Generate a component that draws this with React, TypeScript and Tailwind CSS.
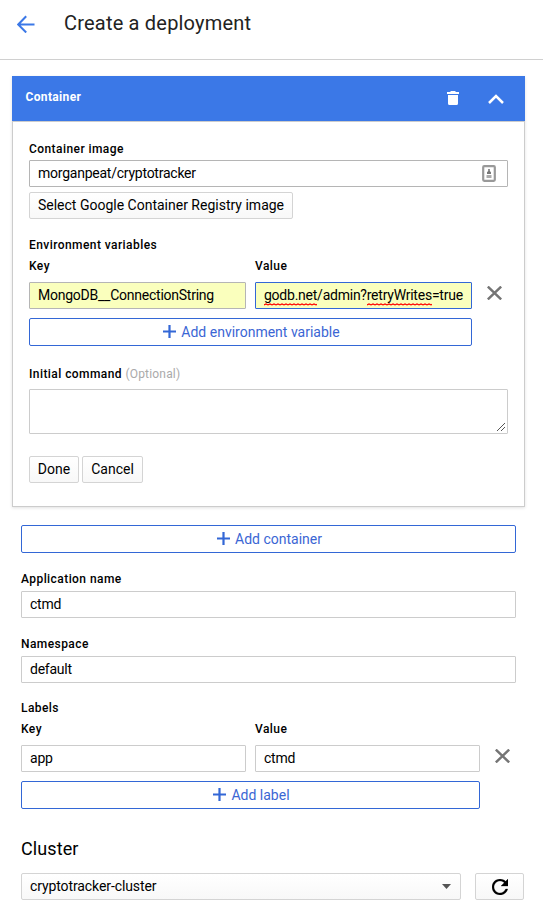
import type { ReactNode } from 'react';

const input =
  'flex h-[27px] items-center rounded-[1px] border px-2 text-[14px] tracking-[-0.24px] whitespace-nowrap';
const button =
  'flex h-[27px] items-center justify-center rounded-[2px] border border-[#d4d4d4] bg-linear-to-b from-white to-[#f8f8f8] text-[14px]';

function Label({ children, className = '' }: { children: ReactNode; className?: string }) {
  return (
    <div className={`h-4 text-[12px] leading-4 font-medium tracking-[0.43px] whitespace-nowrap ${className}`}>
      {children}
    </div>
  );
}

function AddButton({ children, className = '' }: { children: ReactNode; className?: string }) {
  return (
    <button
      className={`flex h-7 w-full items-center justify-center gap-[5px] rounded-[2px] border border-[#3367d6] pl-[2px] text-[14px] text-[#3b66d4] ${className}`}
    >
      <svg width="13" height="13" viewBox="0 0 13 13" className="mb-[2px]" fill="none" stroke="#3367d6" strokeWidth="2.2">
        <path d="M6.5 0v13M0 6.5h13" />
      </svg>
      {children}
    </button>
  );
}

function RemoveIcon() {
  return (
    <svg width="15" height="14" viewBox="0 0 15 14" fill="none" stroke="#757575" strokeWidth="2.5">
      <path d="M.8.6l13.4 12.8M14.2.6L.8 13.4" />
    </svg>
  );
}

function Misspelled({ children }: { children: ReactNode }) {
  return (
    <span className="relative">
      {children}
      <svg className="absolute bottom-0 left-0 h-[3px] w-full" aria-hidden="true">
        <defs>
          <pattern id="squiggle" width="4" height="3" patternUnits="userSpaceOnUse">
            <path d="M0 2L2 1L4 2" fill="none" stroke="#f00" strokeWidth="1.2" />
          </pattern>
        </defs>
        <rect width="100%" height="3" fill="url(#squiggle)" />
      </svg>
    </span>
  );
}

export default function App() {
  return (
    <div className="h-[912px] w-[543px] overflow-hidden bg-white font-['Roboto',sans-serif] text-black">
      <header className="flex h-[60px] items-start border-b border-[#d0d0d0]">
        <svg width="18" height="18" viewBox="0 0 18 18" className="mt-[15px] ml-[17px]" fill="none" stroke="#3b78e7" strokeWidth="2">
          <path d="M17.5 9.5H1.5M9.2 1.2L1.2 9.5l8 8" />
        </svg>
        <h1 className="mt-[11px] ml-[29px] text-[20px] leading-6 tracking-[0.2px] text-[#222]">Create a deployment</h1>
      </header>

      <section className="mt-4 ml-3 h-[431px] w-[513px] shadow-[0_1px_3px_rgba(0,0,0,0.12)]">
        <div className="flex h-[45px] items-center bg-[#3b78e7] text-white">
          <div className="mb-[3px] ml-[13.5px] flex-1 text-[12px] font-bold tracking-[0.35px]">Container</div>
          <svg width="12" height="14" viewBox="0 0 12 14" className="mb-[2px]" fill="#fff">
            <path d="M0 1h3l1-1h4l1 1h3v2H0zM1 4h10v8.5a1.5 1.5 0 0 1-1.5 1.5h-7A1.5 1.5 0 0 1 1 12.5z" />
          </svg>
          <svg width="16" height="10" viewBox="0 0 16 10" className="mr-[21px] ml-[29px]" fill="none" stroke="#fff" strokeWidth="2.5">
            <path d="M1 9l7-7 7 7" />
          </svg>
        </div>
        <div className="h-[386px] border border-[#ccc] px-4 pt-[19px]">
          <Label>Container image</Label>
          <div className={`${input} mt-[3px] w-[479px] justify-between border-[#b5b5b5] bg-white`}>
            <span>morganpeat/cryptotracker</span>
            <svg width="14" height="17" viewBox="0 0 14 17" className="mr-[3px]">
              <rect x="1.2" y="1.2" width="11.6" height="14.6" rx="1" fill="none" stroke="#999" strokeWidth="2.2" />
              <path d="M6.2 4h1.6v2L9 7.200V9H5V7.200L6.200 6z" fill="#777" />
              <path d="M4.500 10h5v3h-5z" fill="#aaa" />
            </svg>
          </div>
          <button className={`${button} mt-[5px] w-[264px]`}>Select Google Container Registry image</button>

          <Label className="mt-[18px]">Environment variables</Label>
          <div className="mt-[5px] flex">
            <Label className="w-[226px]">Key</Label>
            <Label>Value</Label>
          </div>
          <div className="mt-2 flex">
            <div className={`${input} w-[217px] border-[#b5b5b5] bg-[#faffbd]`}>MongoDB__ConnectionString</div>
            <div className={`${input} ml-[9px] w-[217px] border-[#3367d6] bg-[#faffbd]`}>
              <Misspelled>godb.net</Misspelled>/admin?<Misspelled>retryWrites</Misspelled>=true
            </div>
            <button className="mt-[4px] ml-[15px] h-[14px]">
              <RemoveIcon />
            </button>
          </div>
          <AddButton className="mt-[9px] max-w-[443px]">Add environment variable</AddButton>

          <Label className="mt-5">
            Initial command <span className="font-normal tracking-[0.18px] text-[#aaa]">(Optional)</span>
          </Label>
          <div className="mt-[7px] flex h-[45px] w-[479px] items-end justify-end rounded-[1px] border border-[#ccc] p-[2px]">
            <svg width="8" height="8" viewBox="0 0 8 8" stroke="#555" strokeWidth="1">
              <path d="M0 8L8 0M4 8L8 4" />
            </svg>
          </div>
          <div className="mt-[22px] flex gap-[3px]">
            <button className={`${button} w-[50px]`}>Done</button>
            <button className={`${button} w-[61px]`}>Cancel</button>
          </div>
        </div>
      </section>

      <div className="ml-[21px] w-[495px] pt-[18px]">
        <AddButton>Add container</AddButton>
        <Label className="mt-[18px]">Application name</Label>
        <div className={`${input} mt-1 border-[#ccc] bg-white`}>ctmd</div>
        <Label className="mt-[18px]">Namespace</Label>
        <div className={`${input} mt-1 border-[#ccc] bg-white`}>default</div>

        <Label className="mt-[17px]">Labels</Label>
        <div className="mt-[5px] flex">
          <Label className="w-[234px]">Key</Label>
          <Label>Value</Label>
        </div>
        <div className="mt-2 flex">
          <div className={`${input} w-[225px] border-[#ccc] bg-white`}>app</div>
          <div className={`${input} ml-[9px] w-[225px] border-[#ccc] bg-white`}>ctmd</div>
          <button className="mt-[4px] ml-[15px] h-[14px]">
            <RemoveIcon />
          </button>
        </div>
        <AddButton className="mt-[9px] max-w-[459px]">Add label</AddButton>

        <h2 className="mt-7 h-6 text-[18px] leading-6 tracking-[0.1px]">Cluster</h2>
      </div>
      <div className="mt-3 ml-[21px] flex">
        <button className={`${button} w-[440px] pr-[9px] pl-2`}>
          <span className="flex-1 text-left tracking-[-0.1px]">cryptotracker-cluster</span>
          <svg width="9" height="5" viewBox="0 0 9 5" fill="#555">
            <path d="M0 0h9L4.5 5z" />
          </svg>
        </button>
        <button className={`${button} ml-[14px] w-[49px]`}>
          <svg width="16" height="16" viewBox="4 4 16 16" fill="#000" stroke="#000" strokeWidth="0.3">
            <path d="M17.65 6.35C16.2 4.9 14.21 4 12 4c-4.42 0-7.99 3.58-7.99 8s3.57 8 7.99 8c3.73 0 6.84-2.55 7.73-6h-2.08c-.82 2.33-3.04 4-5.65 4-3.31 0-6-2.69-6-6s2.69-6 6-6c1.66 0 3.14.69 4.22 1.78L13 11h7V4l-2.35 2.35z" />
          </svg>
        </button>
      </div>
    </div>
  );
}
